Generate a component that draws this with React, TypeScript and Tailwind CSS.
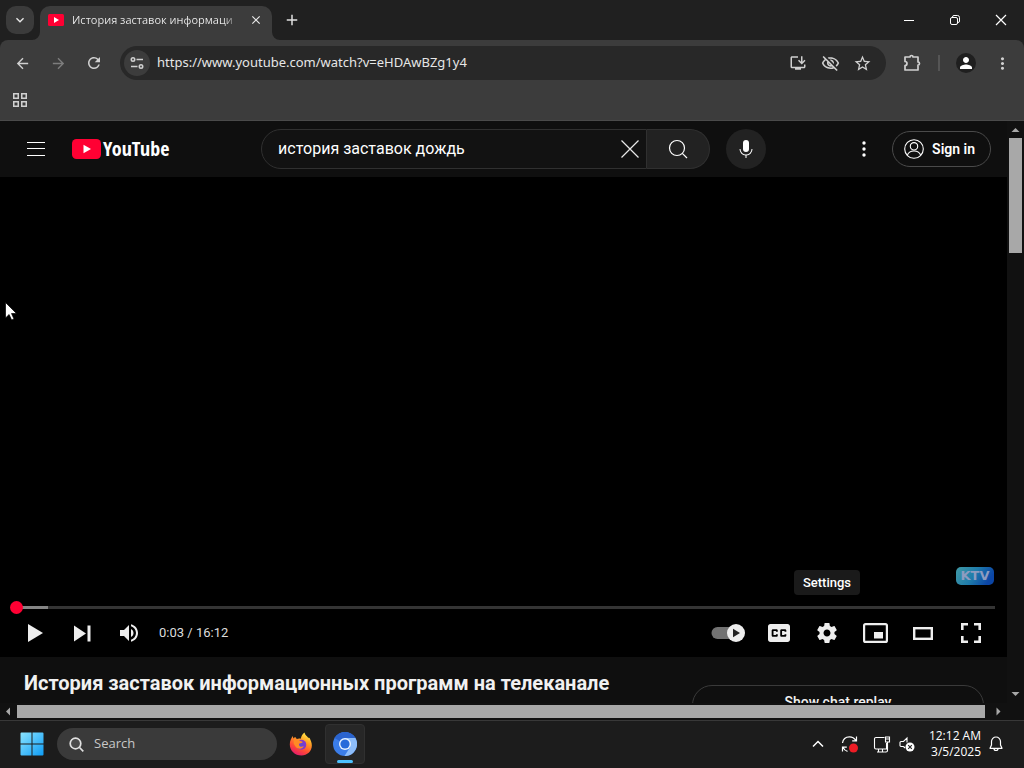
import React from "react";
import {
  MdArrowBack,
  MdArrowForward,
  MdRefresh,
  MdOutlineInstallDesktop,
  MdOutlineVisibilityOff,
  MdStarOutline,
  MdPerson,
  MdMoreVert,
  MdAdd,
  MdClose,
  MdExpandMore,
} from "react-icons/md";

const UI = "font-['Open_Sans','Noto_Sans',sans-serif]";

function IconButton({ label, className = "", children }: { label: string; className?: string; children: React.ReactNode }) {
  return (
    <button type="button" aria-label={label} className={`flex shrink-0 items-center justify-center ${className}`}>
      {children}
    </button>
  );
}

function PlayBadge({ width, height }: { width: number; height: number }) {
  return (
    <svg width={width} height={height} viewBox="0 0 29 20" className="shrink-0" aria-hidden="true">
      <rect width="29" height="20" rx="4.500" fill="#ff0033" />
      <path d="M11.500 5.800 19 10l-7.500 4.200Z" fill="#fff" />
    </svg>
  );
}

function TabStrip() {
  return (
    <div className="flex h-10 shrink-0 items-end bg-[#202020] pl-1.5">
      <IconButton label="Search tabs" className="mb-1.5 mr-1.5 size-7 rounded-[10px] bg-[#3b3b3b] text-[#e8e8e8]">
        <MdExpandMore size={16} />
      </IconButton>
      <div className="relative flex h-[34px] w-[232px] items-center rounded-t-[10px] bg-[#3c3c3c] pr-2 pl-2">
        <svg width="8" height="8" viewBox="0 0 8 8" className="absolute bottom-0 -left-2" aria-hidden="true">
          <path d="M8 0v8H0a8 8 0 0 0 8-8Z" fill="#3c3c3c" />
        </svg>
        <svg width="16" height="12" viewBox="0 0 16 12" className="-mt-1.5 shrink-0" aria-hidden="true">
          <rect width="16" height="12" rx="1.500" fill="#ff0033" />
          <path d="m6 3 5 3-5 3Z" fill="#fff" />
        </svg>
        <span className="mr-2 -mt-1.5 ml-2 flex-1 overflow-hidden bg-linear-to-r from-[#f0f0f0] from-90% to-transparent bg-clip-text text-[11px] leading-4 whitespace-nowrap text-transparent">
          История заставок информаци
        </span>
        <IconButton label="Close tab" className="-mt-1.5 size-4 text-[#e8e8e8]">
          <MdClose size={14} />
        </IconButton>
        <svg width="8" height="8" viewBox="0 0 8 8" className="absolute -right-2 bottom-0" aria-hidden="true">
          <path d="M0 0v8h8a8 8 0 0 1-8-8Z" fill="#3c3c3c" />
        </svg>
      </div>
      <IconButton label="New tab" className="mb-1.5 ml-1.5 size-7 text-[#e0e0e0]">
        <MdAdd size={18} />
      </IconButton>
      <div className="ml-auto flex h-10 text-white">
        <IconButton label="Minimize" className="w-[46px]">
          <svg width="10" height="10" viewBox="0 0 10 10">
            <path d="M0 5.500h10" stroke="currentColor" />
          </svg>
        </IconButton>
        <IconButton label="Restore" className="w-[46px]">
          <svg width="10" height="10" viewBox="0 0 10 10" fill="none" stroke="currentColor">
            <rect x=".5" y="2.500" width="7" height="7" rx="1.500" />
            <path d="M2.500 2.500V2A1.500 1.500 0 0 1 4 .5h3.500a2 2 0 0 1 2 2V6A1.500 1.500 0 0 1 8 7.500h-.5" />
          </svg>
        </IconButton>
        <IconButton label="Close" className="w-[46px]">
          <svg width="12" height="12" viewBox="0 0 12 12" stroke="currentColor" strokeWidth="1.200">
            <path d="m1 1 10 10M11 1 1 11" />
          </svg>
        </IconButton>
      </div>
    </div>
  );
}

function Toolbar() {
  return (
    <div className="shrink-0 bg-[#202020]">
      <div className="flex h-[46px] items-center rounded-t-lg bg-[#3c3c3c] px-1 text-[#d0d0d0]">
        <IconButton label="Back" className="w-9">
          <MdArrowBack size={17} />
        </IconButton>
        <IconButton label="Forward" className="w-9 text-[#7d7d7d]">
          <MdArrowForward size={17} />
        </IconButton>
        <IconButton label="Reload" className="w-9">
          <MdRefresh size={18} />
        </IconButton>
        <div className="ml-2 flex h-[34px] min-w-0 flex-1 items-center rounded-full bg-[#282828] pr-2 pl-1">
          <IconButton label="View site information" className="size-[26px] rounded-full bg-[#3c3c3c]">
            <svg width="14" height="14" viewBox="0 0 14 14" fill="none" stroke="currentColor" strokeWidth="1.600">
              <circle cx="3" cy="3.500" r="1.700" />
              <path d="M6.500 3.500H13M1 10.500h6.500" />
              <circle cx="11" cy="10.500" r="1.700" />
            </svg>
          </IconButton>
          <input
            aria-label="Address"
            defaultValue="https://www.youtube.com/watch?v=eHDAwBZg1y4"
            className="ml-[7px] min-w-0 flex-1 bg-transparent font-['Noto_Sans',sans-serif] text-[13px] text-[#e6e6e6] outline-none"
          />
          <IconButton label="Install app" className="w-8">
            <MdOutlineInstallDesktop size={18} />
          </IconButton>
          <IconButton label="Third-party cookies blocked" className="w-8">
            <MdOutlineVisibilityOff size={19} />
          </IconButton>
          <IconButton label="Bookmark" className="w-8">
            <MdStarOutline size={19} />
          </IconButton>
        </div>
        <IconButton label="Extensions" className="ml-2 w-9">
          <svg width="18" height="18" viewBox="0 0 18 18" fill="none" stroke="currentColor" strokeWidth="1.700" strokeLinejoin="round">
            <path d="M2 3h5a1.500 1.500 0 0 1 3 0h5v5a1.500 1.500 0 0 1 0 3v5H2v-4.500a2 2 0 0 0 0-4Z" />
          </svg>
        </IconButton>
        <div className="mx-2 h-4 w-0.5 bg-[#555555]" />
        <IconButton label="Profile" className="w-9">
          <span className="flex size-5 items-center justify-center rounded-full bg-[#1f1f1f] text-white">
            <MdPerson size={18} />
          </span>
        </IconButton>
        <IconButton label="Customize" className="w-9">
          <MdMoreVert size={19} />
        </IconButton>
      </div>
      <div className="flex h-[35px] items-start border-b border-[#4a4a4a] bg-[#3c3c3c] px-1 text-[#d0d0d0]">
        <IconButton label="All bookmarks" className="h-7 w-8">
          <svg width="14" height="14" viewBox="0 0 14 14" fill="none" stroke="currentColor" strokeWidth="1.500">
            <path d="M.75.75h4.500v4.500H.75ZM8.750.75h4.500v4.500h-4.500ZM.75 8.750h4.500v4.500H.75ZM8.750 8.750h4.500v4.500h-4.500Z" />
          </svg>
        </IconButton>
      </div>
    </div>
  );
}

function Masthead() {
  return (
    <header className="flex h-14 shrink-0 items-center bg-[#0f0f0f] pr-4 pl-4 text-white">
      <IconButton label="Guide" className="size-10">
        <svg width="24" height="24" viewBox="0 0 24 24" fill="#fff">
          <path d="M3 5h18v1H3ZM3 11h18v1H3ZM3 18h18v1H3Z" />
        </svg>
      </IconButton>
      <a href="#home" aria-label="YouTube Home" className="ml-4 flex items-center gap-0.5">
        <PlayBadge width={29} height={20} />
        <span className="font-['Open_Sans_Condensed','Roboto_Condensed','Liberation_Sans_Narrow',Roboto,sans-serif] text-xl leading-6 font-bold">
          YouTube
        </span>
      </a>
      <form className="mr-4 ml-auto flex h-10 w-[449px] min-w-0" onSubmit={(e) => e.preventDefault()}>
        <div className="flex min-w-0 flex-1 items-center rounded-l-full border border-[#303030] bg-[#121212] pl-4">
          <input
            aria-label="Search"
            defaultValue="история заставок дождь"
            className="min-w-0 flex-1 bg-transparent text-base text-white outline-none"
          />
          <IconButton label="Clear search" className="w-8">
            <svg width="20" height="20" viewBox="0 0 20 20" stroke="#e8e8e8" strokeWidth="1.200">
              <path d="m1.500 1.500 17 17M18.500 1.500l-17 17" />
            </svg>
          </IconButton>
        </div>
        <IconButton label="Submit search" className="w-[63px] rounded-r-full border border-l-0 border-[#303030] bg-[#222222]">
          <svg width="20" height="20" viewBox="0 0 20 20" fill="none" stroke="#fff" strokeWidth="1.200">
            <circle cx="9" cy="9" r="7.500" />
            <path d="m14.300 14.300 4.700 4.700" />
          </svg>
        </IconButton>
      </form>
      <IconButton label="Search with your voice" className="size-10 rounded-full bg-[#222222]">
        <svg width="24" height="24" viewBox="0 0 24 24" fill="#fff">
          <path d="M12 3a3 3 0 0 0-3 3v6a3 3 0 0 0 6 0V6a3 3 0 0 0-3-3Z" />
          <path d="M18.500 12h-1a5.500 5.500 0 0 1-11 0h-1a6.500 6.500 0 0 0 6 6.470V21h1v-2.530a6.500 6.500 0 0 0 6-6.470Z" />
        </svg>
      </IconButton>
      <IconButton label="More" className="ml-[78px] size-10">
        <svg width="4" height="16" viewBox="0 0 4 16" fill="#fff">
          <circle cx="2" cy="2" r="1.700" />
          <circle cx="2" cy="8" r="1.700" />
          <circle cx="2" cy="14" r="1.700" />
        </svg>
      </IconButton>
      <a href="#signin" className="ml-2 flex h-9 items-center gap-2 rounded-full border border-[#4a4a4a] px-[11px] pr-[15px] text-sm font-semibold whitespace-nowrap">
        <svg width="20" height="20" viewBox="0 0 20 20" fill="none" stroke="#fff" strokeWidth="1.100">
          <circle cx="10" cy="10" r="9.300" />
          <circle cx="10" cy="7.300" r="3.700" />
          <path d="M3.300 16.300c.8-2.600 3.200-4.300 6.700-4.300s5.900 1.700 6.700 4.300" />
        </svg>
        Sign in
      </a>
    </header>
  );
}

const CC_PATH =
  "M11,11 C9.89,11 9,11.9 9,13 L9,23 C9,24.1 9.89,25 11,25 L25,25 C26.1,25 27,24.1 27,23 L27,13 C27,11.9 26.1,11 25,11 Z M17,17 L15.5,17 L15.5,16.5 L13.5,16.5 L13.5,19.5 L15.5,19.5 L15.5,19 L17,19 L17,20 C17,20.55 16.55,21 16,21 L13,21 C12.45,21 12,20.55 12,20 L12,16 C12,15.45 12.45,15 13,15 L16,15 C16.55,15 17,15.45 17,16 Z M24,17 L22.5,17 L22.5,16.5 L20.5,16.5 L20.5,19.5 L22.5,19.5 L22.5,19 L24,19 L24,20 C24,20.55 23.55,21 23,21 L20,21 C19.45,21 19,20.55 19,20 L19,16 C19,15.45 19.45,15 20,15 L23,15 C23.55,15 24,15.45 24,16 Z";
const GEAR_PATH =
  "m 23.94,18.78 c .03,-0.25 .05,-0.51 .05,-0.78 0,-0.27 -0.02,-0.52 -0.05,-0.78 l 1.68,-1.32 c .15,-0.12 .19,-0.33 .09,-0.51 l -1.6,-2.76 c -0.09,-0.17 -0.31,-0.24 -0.48,-0.17 l -1.99,.8 c -0.41,-0.32 -0.86,-0.58 -1.35,-0.78 l -0.30,-2.12 c -0.02,-0.19 -0.19,-0.33 -0.39,-0.33 l -3.2,0 c -0.2,0 -0.36,.14 -0.39,.33 l -0.30,2.12 c -0.48,.2 -0.93,.47 -1.35,.78 l -1.99,-0.8 c -0.18,-0.07 -0.39,0 -0.48,.17 l -1.6,2.76 c -0.10,.17 -0.05,.39 .09,.51 l 1.68,1.32 c -0.03,.25 -0.05,.52 -0.05,.78 0,.26 .02,.52 .05,.78 l -1.68,1.32 c -0.15,.12 -0.19,.33 -0.09,.51 l 1.6,2.76 c .09,.17 .31,.24 .48,.17 l 1.99,-0.8 c .41,.32 .86,.58 1.35,.78 l .30,2.12 c .02,.19 .19,.33 .39,.33 l 3.2,0 c .2,0 .36,-0.14 .39,-0.33 l .30,-2.12 c .48,-0.2 .93,-0.47 1.35,-0.78 l 1.99,.8 c .18,.07 .39,0 .48,-0.17 l 1.6,-2.76 c .09,-0.17 .05,-0.39 -0.09,-0.51 l -1.68,-1.32 z m -5.94,2.01 c -1.54,0 -2.8,-1.25 -2.8,-2.8 0,-1.54 1.25,-2.8 2.8,-2.8 1.54,0 2.8,1.25 2.8,2.8 0,1.54 -1.25,2.8 -2.8,2.8 z";

function Player() {
  return (
    <section className="relative flex min-h-0 flex-1 flex-col justify-end bg-black px-3 text-[#eeeeee]">
      <svg width="38" height="18" viewBox="0 0 38 18" className="absolute right-[13px] bottom-[72px]" aria-label="KTV">
        <defs>
          <linearGradient id="ktv" x1="0" y1="0" x2="1" y2=".3">
            <stop offset="0" stopColor="#419aa5" />
            <stop offset=".55" stopColor="#1f7cab" />
            <stop offset="1" stopColor="#0b45a5" />
          </linearGradient>
        </defs>
        <rect width="38" height="18" rx="5" fill="url(#ktv)" />
        <text x="19" y="13" textAnchor="middle" fontFamily="DejaVu Sans" fontWeight="bold" fontSize="13" fill="#8d9cc0">
          KTV
        </text>
      </svg>
      <div role="tooltip" className="absolute right-[147px] bottom-[62px] rounded bg-[#1a1a1a] px-[9px] text-[13px] leading-[25px] font-medium text-white">
        Settings
      </div>
      <div className="relative flex h-[3px] items-center bg-[#343434]">
        <div className="h-full w-9 bg-[#858585]" />
        <div className="absolute -left-0.5 size-[13px] rounded-full bg-[#ff0033]" />
      </div>
      <div className="flex h-12 items-center">
        <IconButton label="Play" className="h-12 w-[47px]">
          <svg width="15" height="18" viewBox="0 0 15 18" fill="#eee">
            <path d="M0 0v18l15-9Z" />
          </svg>
        </IconButton>
        <IconButton label="Next" className="h-12 w-[47px]">
          <svg width="17" height="17" viewBox="0 0 17 17" fill="#eee">
            <path d="M0 .5v16l12-8ZM13.500.5h3v16h-3Z" />
          </svg>
        </IconButton>
        <IconButton label="Mute" className="h-12 w-[46px]">
          <svg width="18" height="18" viewBox="8 9 18 18" fill="#eee">
            <path d="M8 21h4l5 5V10l-5 5H8v6ZM19 14v8c1.480-.68 2.500-2.230 2.500-4s-1.020-3.260-2.500-4Z" />
            <path d="M19 11.290C21.890 12.150 24 14.830 24 18s-2.110 5.850-5 6.710v2.060c4.010-.91 7-4.490 7-8.770s-2.990-7.860-7-8.770v2.060Z" />
          </svg>
        </IconButton>
        <span className="ml-[7px] text-[13px] text-[#dddddd]">0:03 / 16:12</span>
        <div className="ml-auto flex">
          <IconButton label="Autoplay" className="h-12 w-[54px]">
            <svg width="34" height="18" viewBox="0 0 34 18">
              <rect x=".5" y="3" width="28" height="12" rx="6" fill="#727272" />
              <circle cx="25" cy="9" r="9" fill="#eee" />
              <path d="m22 4.800 7 4.200-7 4.200Z" fill="#222" />
            </svg>
          </IconButton>
          <IconButton label="Subtitles" className="h-12 w-12">
            <svg width="22" height="18" viewBox="9 11 18 14" preserveAspectRatio="none" fill="#eee" fillRule="evenodd">
              <path d={CC_PATH} />
            </svg>
          </IconButton>
          <IconButton label="Settings" className="h-12 w-12">
            <svg width="20" height="20" viewBox="10 10 16 16" fill="#eee" fillRule="evenodd">
              <path d={GEAR_PATH} />
            </svg>
          </IconButton>
          <IconButton label="Miniplayer" className="h-12 w-12">
            <svg width="25" height="20" viewBox="0 0 25 20" fill="none">
              <rect x="1.100" y="1.100" width="22.800" height="17.800" rx="1.500" stroke="#eee" strokeWidth="2.200" />
              <path d="M11 9h9v6.500h-9Z" fill="#eee" />
            </svg>
          </IconButton>
          <IconButton label="Theater mode" className="h-12 w-12">
            <svg width="20" height="13" viewBox="0 0 20 13" fill="none">
              <rect x="1.200" y="1.200" width="17.600" height="10.600" stroke="#eee" strokeWidth="2.400" />
            </svg>
          </IconButton>
          <IconButton label="Full screen" className="h-12 w-12">
            <svg width="20" height="20" viewBox="0 0 20 20" fill="none" stroke="#eee" strokeWidth="2.600">
              <path d="M1.300 7V1.300H7M13 1.300h5.700V7M18.700 13v5.700H13M7 18.700H1.300V13" />
            </svg>
          </IconButton>
        </div>
      </div>
    </section>
  );
}

function BelowPlayer() {
  return (
    <div className="flex h-[46px] shrink-0 items-start justify-between overflow-hidden bg-[#0f0f0f] pr-[23px] pl-6 text-[#f1f1f1]">
      <h1 className="pt-3 text-xl leading-7 font-bold whitespace-nowrap">История заставок информационных программ на телеканале</h1>
      <button type="button" className="mt-7 h-[34px] w-[292px] shrink-0 rounded-t-[20px] border border-[#3a3a3a] text-sm font-medium">
        Show chat replay
      </button>
    </div>
  );
}

function Triangle({ d }: { d: string }) {
  return (
    <svg width="9" height="9" viewBox="0 0 9 9" fill="#a8a8a8" className="shrink-0" aria-hidden="true">
      <path d={d} />
    </svg>
  );
}

function BrowserPage() {
  return (
    <main className="flex min-h-0 flex-1 flex-col bg-[#111111] font-[Roboto,sans-serif]">
      <div className="flex min-h-0 flex-1">
        <div className="flex min-w-0 flex-1 flex-col">
          <Masthead />
          <Player />
          <BelowPlayer />
        </div>
        <div className="flex w-[17px] shrink-0 flex-col items-center py-1">
          <Triangle d="M.5 7h8l-4-4Z" />
          <div className="mt-1 h-[115px] w-[13px] bg-[#a8a8a8]" />
          <div className="flex-1" />
          <Triangle d="M.5 2h8l-4 4Z" />
        </div>
      </div>
      <div className="flex h-[17px] shrink-0 items-center pl-1">
        <Triangle d="M6 .5v8l-4-4Z" />
        <div className="mr-2 ml-1 h-[13px] flex-1 bg-[#a8a8a8]" />
        <Triangle d="M3.500 .5v8l4-4Z" />
        <div className="w-[22px]" />
      </div>
    </main>
  );
}

function FirefoxIcon() {
  return (
    <svg width="24" height="24" viewBox="0 0 24 24">
      <defs>
        <linearGradient id="fx" x1=".8" y1="0" x2=".3" y2="1">
          <stop offset="0" stopColor="#fff44f" />
          <stop offset=".35" stopColor="#ffa024" />
          <stop offset=".7" stopColor="#ff4a35" />
          <stop offset="1" stopColor="#e3186f" />
        </linearGradient>
        <radialGradient id="fxg">
          <stop offset="0" stopColor="#5b4bd8" />
          <stop offset="1" stopColor="#8a34c9" />
        </radialGradient>
      </defs>
      <path d="M15.500.5c.5 2.500 2.500 3.600 3.700 5.300 1-.1 1.600.5 1.900 1.100.4 1 .6 1.700 1 2.600 2.800 7.500-2.700 14-9.600 14C5.800 23.500.8 18.600.8 12.500c0-3.600 1.400-6.200 3-8.500l.6 2.500c.6-.6 1.300-1.100 2-1.400.2.9.9 1.500 1.500 1.900 1.200-.5 2.700-.7 3.900-.2.4-2.500 1.600-5 3.700-6.300Z" fill="url(#fx)" />
      <circle cx="12.300" cy="12.800" r="5" fill="url(#fxg)" />
      <path d="M4.700 7c2.300-.7 4.500.3 6.600 1.900 1.300.2 2.300.7 2.300 1.300-.3 1-2 .9-3.200 1.300-.7.8-.5 2 .4 2.700 1.300 1 2.700.3 3.900.1-.6 1.600-2.300 2.700-4.300 2.500-2.700-.2-4.500-2.300-5.700-5.300Z" fill="#ff8b25" />
    </svg>
  );
}

function ChromiumIcon() {
  return (
    <svg width="24" height="24" viewBox="0 0 24 24">
      <circle cx="12" cy="12" r="12" fill="#3b7de8" />
      <path d="M12 6h10.400A12 12 0 0 1 11.500 24l5.700-9Z" fill="#8dbdfa" />
      <path d="M1.600 6A12 12 0 0 1 22.400 6H12a6 6 0 0 0-5.200 3Z" fill="#2a63ce" />
      <circle cx="12" cy="12" r="6" fill="#e8f2ff" />
      <circle cx="12" cy="12" r="4.600" fill="#286bda" />
    </svg>
  );
}

function Taskbar() {
  return (
    <footer className="flex h-12 shrink-0 items-center border-t border-[#383838] bg-[#1c1c1c] pb-px pl-5 text-white">
      <IconButton label="Start" className="h-10 w-6">
        <svg width="24" height="24" viewBox="0 0 24 24">
          <defs>
            <linearGradient id="win" x1="0" y1="0" x2="1" y2="1">
              <stop offset="0" stopColor="#8be4ff" />
              <stop offset="1" stopColor="#0e9cf5" />
            </linearGradient>
          </defs>
          <path d="M1.500.5h10v11h-11v-10a1 1 0 0 1 1-1ZM12.500.5h10a1 1 0 0 1 1 1v10h-11ZM.5 12.500h11v11h-10a1 1 0 0 1-1-1ZM12.500 12.500h11v10a1 1 0 0 1-1 1h-10Z" fill="url(#win)" />
        </svg>
      </IconButton>
      <label className="ml-[13px] flex h-8 w-[220px] items-center gap-2.5 rounded-full bg-[#3a3a3a] pl-3">
        <svg width="15" height="15" viewBox="0 0 15 15" fill="#4b4b4b" stroke="#e0e0e0" strokeWidth="1.700">
          <circle cx="6.500" cy="6.500" r="5.300" />
          <path d="m10.500 10.500 3.800 3.800" />
        </svg>
        <input aria-label="Search" placeholder="Search" className="min-w-0 flex-1 bg-transparent text-[13px] outline-none placeholder:text-[#c8c8c8]" />
      </label>
      <IconButton label="Firefox" className="h-10 w-12">
        <FirefoxIcon />
      </IconButton>
      <IconButton label="Chromium" className="relative size-10 rounded border border-[#303030] bg-[#272727]">
        <ChromiumIcon />
        <span className="absolute bottom-0 h-[3px] w-4 rounded-full bg-[#4cc2ff]" />
      </IconButton>
      <div className="ml-auto flex items-center">
        <IconButton label="Show hidden icons" className="h-10 w-8">
          <svg width="12" height="8" viewBox="0 0 12 8" fill="none" stroke="#fff" strokeWidth="1.500">
            <path d="m1 6.500 5-5 5 5" />
          </svg>
        </IconButton>
        <IconButton label="Update available" className="h-10 w-8">
          <svg width="18" height="18" viewBox="0 0 18 18" fill="none" stroke="#fff" strokeWidth="1.200">
            <path d="M1.500 8C2 4 5 1.800 8.500 1.800c2.700 0 4.800 1.200 6.500 3.700M15.500 1.500v4.300h-4.300M1.500 16.500v-4.300h4.300M2 12.500c1 2 2.500 3.300 4.500 3.800" />
            <circle cx="12.500" cy="13" r="4.500" fill="#ee1c25" stroke="none" />
          </svg>
        </IconButton>
        <button type="button" aria-label="Network and volume" className="ml-[7px] flex h-10 items-center gap-2">
          <svg width="18" height="17" viewBox="0 0 18 17" fill="none" stroke="#fff" strokeWidth="1.100">
            <path d="M11.500 1.500H3A1.500 1.500 0 0 0 1.500 3v8.500A1.500 1.500 0 0 0 3 13h10.500V7M4 16h7.500M5.500 13v3M9.500 13v3" />
            <path d="M12.500 1h4v5h-4ZM14.500 6v8.500a1.500 1.500 0 0 1-1.500 1.500h-1.500M12.500 3h4" />
          </svg>
          <svg width="16" height="16" viewBox="0 0 16 16" fill="none" stroke="#fff" strokeWidth="1.100">
            <path d="M4.500 10.500H2a1 1 0 0 1-1-1v-3a1 1 0 0 1 1-1h2.500L8 2v4.500M4.500 10.500 6 12" />
            <circle cx="11" cy="11" r="4.500" fill="#fff" stroke="none" />
            <path d="m9.200 9.200 3.600 3.600M12.800 9.200l-3.600 3.600" stroke="#222" />
          </svg>
        </button>
        <div className="ml-3.5 text-right text-xs leading-4 whitespace-nowrap">
          <div>12:12 AM</div>
          <div>3/5/2025</div>
        </div>
        <IconButton label="Notifications" className="mr-[13px] h-10 w-[30px]">
          <svg width="14" height="16" viewBox="0 0 14 16" fill="none" stroke="#fff" strokeWidth="1.200">
            <path d="M7 1a4.500 4.500 0 0 0-4.500 4.500V9L1 12.300h12L11.500 9V5.500A4.500 4.500 0 0 0 7 1ZM5 12.500a2 2 0 0 0 4 0" strokeLinejoin="round" />
          </svg>
        </IconButton>
      </div>
    </footer>
  );
}

export default function App() {
  return (
    <div className={`relative flex h-screen flex-col overflow-hidden bg-[#202020] ${UI}`}>
      <TabStrip />
      <Toolbar />
      <BrowserPage />
      <Taskbar />
      <svg width="12" height="19" viewBox="0 0 12 19" className="pointer-events-none absolute top-[302px] left-[5px]" aria-hidden="true">
        <path d="M.5.5v15.500l3.600-3.500 2.500 5.500 2.400-1-2.500-5.500h5Z" fill="#fff" stroke="#000" strokeWidth=".7" />
      </svg>
    </div>
  );
}
